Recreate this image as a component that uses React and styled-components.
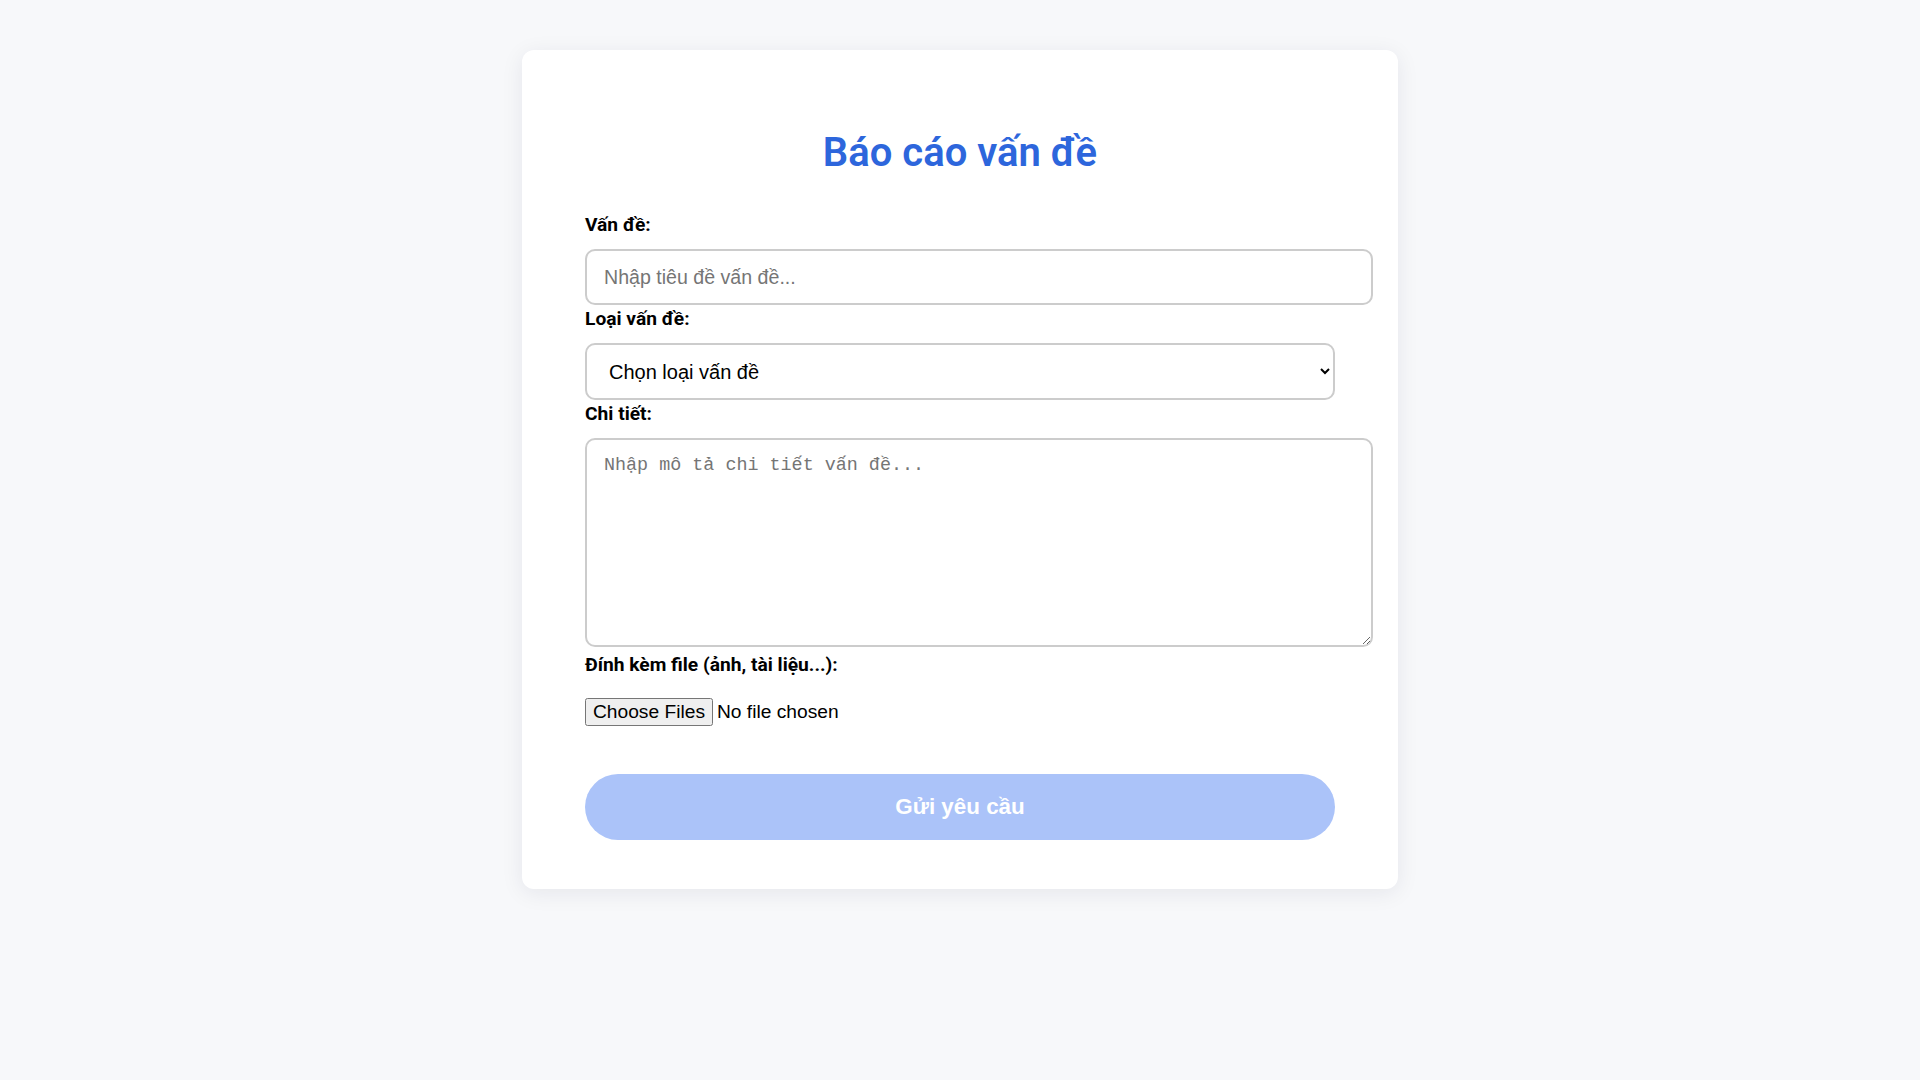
import React from "react";
import styled, { createGlobalStyle } from "styled-components";

const Global = createGlobalStyle`
  html, body { margin: 0; padding: 0; }
  body {
    background: #f7f8fa;
    font-family: Roboto, "Noto Sans", Arial, sans-serif;
    color: #111;
  }
`;

const Page = styled.div`
  min-height: 1080px;
  display: flex;
  justify-content: center;
  align-items: flex-start;
  padding-top: 50px;
  box-sizing: border-box;
`;

const Card = styled.div`
  width: 876px;
  box-sizing: border-box;
  background: #ffffff;
  border-radius: 12px;
  box-shadow: 0 4px 22px rgba(20, 30, 60, 0.08);
  padding: 48px 63px 49px;
`;

const Title = styled.h2`
  margin: 31px 0 37px;
  text-align: center;
  font-family: Roboto, Arial, sans-serif;
  font-weight: 600;
  font-size: 40px;
  line-height: normal;
  color: #2d66dc;
`;

const Form = styled.form`
  display: block;
`;

const Label = styled.label`
  display: block;
  font-family: Roboto, Arial, sans-serif;
  font-weight: 700;
  font-size: 19.2px;
  line-height: normal;
  color: #000;
  margin-bottom: ${(p) => p.$gap ?? 13}px;
`;

const TextInput = styled.input`
  display: block;
  width: 100%;
  box-sizing: content-box;
  padding: 15px 17px;
  border: 2px solid #cccccc;
  border-radius: 10px;
  font-family: "Liberation Sans", Arial, sans-serif;
  font-size: 19.6px;
  line-height: 22px;
  height: 22px;
  margin: 0 0 2px;
  outline: none;
  background: #fff;
  &::placeholder { color: #757575; }
`;

const Select = styled.select`
  display: block;
  width: 100%;
  height: 57px;
  box-sizing: border-box;
  padding: 0 14px 0 18px;
  border: 2px solid #cccccc;
  border-radius: 10px;
  font-family: "Liberation Sans", Arial, sans-serif;
  font-size: 20px;
  color: #000;
  background: #fff;
  margin: 0 0 2px;
  outline: none;
`;

const TextArea = styled.textarea`
  display: block;
  width: 100%;
  height: 175px;
  box-sizing: content-box;
  padding: 15px 17px;
  border: 2px solid #cccccc;
  border-radius: 10px;
  font-family: "Liberation Mono", "DejaVu Sans Mono", monospace;
  font-size: 18.4px;
  margin: 0 0 6px;
  outline: none;
  resize: vertical;
  &::placeholder { color: #757575; }
`;

const FileRow = styled.div`
  height: 28px;
  display: flex;
  align-items: center;
`;

const FileInput = styled.input`
  font-family: "Liberation Sans", Arial, sans-serif;
  font-size: 19.2px;
  color: #000;
`;

const Submit = styled.button`
  display: block;
  width: 100%;
  height: 66px;
  margin-top: 48px;
  border: none;
  border-radius: 33px;
  background: #abc3f9;
  color: #ffffff;
  font-family: "Liberation Sans", Arial, sans-serif;
  font-weight: 700;
  font-size: 22.4px;
  cursor: not-allowed;
`;

export default function App() {
  return (
    <>
      <Global />
      <Page>
        <Card>
          <Title>Báo cáo vấn đề</Title>
          <Form onSubmit={(e) => e.preventDefault()}>
            <Label htmlFor="title">Vấn đề:</Label>
            <TextInput id="title" type="text" placeholder="Nhập tiêu đề vấn đề..." />
            <Label htmlFor="type">Loại vấn đề:</Label>
            <Select id="type" defaultValue="">
              <option value="">Chọn loại vấn đề</option>
              <option value="bug">Lỗi hệ thống</option>
              <option value="other">Khác</option>
            </Select>
            <Label htmlFor="detail">Chi tiết:</Label>
            <TextArea id="detail" placeholder="Nhập mô tả chi tiết vấn đề..." />
            <Label htmlFor="file" $gap={22}>Đính kèm file (ảnh, tài liệu...):</Label>
            <FileRow>
              <FileInput id="file" type="file" multiple />
            </FileRow>
            <Submit type="submit" disabled>Gửi yêu cầu</Submit>
          </Form>
        </Card>
      </Page>
    </>
  );
}
